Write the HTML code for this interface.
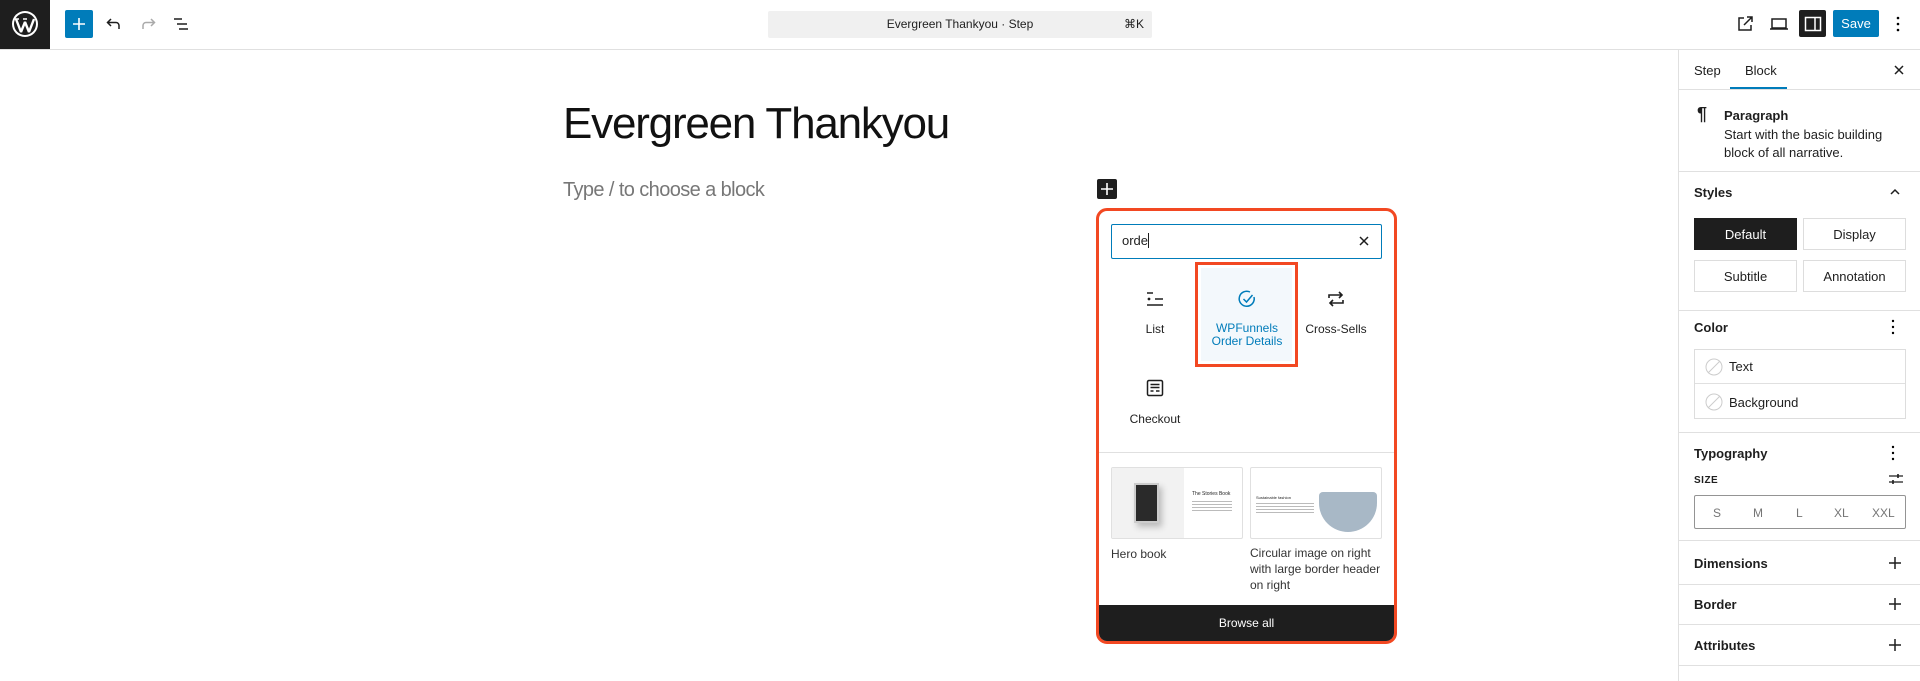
<!DOCTYPE html>
<html><head><meta charset="utf-8"><style>
*{box-sizing:border-box;margin:0;padding:0}
body{width:1920px;height:681px;overflow:hidden;background:#fff;font-family:"Liberation Sans",sans-serif;color:#1e1e1e;font-size:13px;position:relative}
.a{position:absolute}
.hr{position:absolute;height:1px;background:#e0e0e0}
.ic{position:absolute}
.sb{left:1678px;width:242px}
.h2{position:absolute;left:1694px;font-size:13px;font-weight:600;color:#1e1e1e}
.btn{position:absolute;border:1px solid #ddd;height:32px;width:103px;display:flex;align-items:center;justify-content:center;font-size:13px}
.lbl{position:absolute;font-size:12px;text-align:center;width:100px}
</style></head><body>
<!-- top bar -->
<div class="a" style="left:0;top:0;width:50px;height:49px;background:#1e1e1e"></div>
<svg class="ic" style="left:11px;top:10px" width="28" height="28" viewBox="0 0 28 28"><circle cx="14" cy="14" r="13" fill="#fff"/><circle cx="14" cy="14" r="11" fill="#1e1e1e"/><path d="M5 9 L10 22 L14 12 L18 22 L23 9" stroke="#fff" stroke-width="2.4" fill="none" stroke-linejoin="bevel"/><path d="M4 9h4M12 9h4" stroke="#fff" stroke-width="1.5"/></svg>
<div class="hr" style="left:0;top:49px;width:1920px"></div>
<div class="a" style="left:65px;top:10px;width:28px;height:28px;background:#007cba;border-radius:2px"></div>
<svg class="ic" style="left:71px;top:16px" width="16" height="16"><path d="M8 2v12M2 8h12" stroke="#fff" stroke-width="1.6"/></svg>
<svg class="ic" style="left:105px;top:15px" width="18" height="18"><path d="M6 4L2.5 7.5 6 11M3 7.5h8a3 3 0 0 1 3 3V14" stroke="#1e1e1e" stroke-width="1.5" fill="none"/></svg>
<svg class="ic" style="left:139px;top:15px" width="18" height="18"><path d="M12 4l3.5 3.5L12 11M15 7.5H7a3 3 0 0 0-3 3V14" stroke="#aaa" stroke-width="1.5" fill="none"/></svg>
<svg class="ic" style="left:172px;top:15px" width="18" height="18"><path d="M2 4h8M5 9h10M7 14h9" stroke="#1e1e1e" stroke-width="1.5"/></svg>
<div class="a" style="left:768px;top:11px;width:384px;height:27px;background:#f0f0f0;border-radius:2px"></div>
<div class="a" style="left:768px;top:11px;width:384px;height:27px;line-height:27px;text-align:center;font-size:12px">Evergreen Thankyou · Step</div>
<div class="a" style="left:1124px;top:11px;line-height:27px;font-size:12px">⌘K</div>
<svg class="ic" style="left:1735px;top:14px" width="20" height="20"><path d="M9 4H4v12h12v-5M12 3h5v5M17 3l-8 8" stroke="#1e1e1e" stroke-width="1.5" fill="none"/></svg>
<svg class="ic" style="left:1768px;top:14px" width="22" height="20"><path d="M4 5h14v9H4zM2 15h18" stroke="#1e1e1e" stroke-width="1.5" fill="none"/></svg>
<div class="a" style="left:1799px;top:10px;width:27px;height:27px;background:#1e1e1e;border-radius:2px"></div>
<svg class="ic" style="left:1803px;top:14px" width="20" height="20"><rect x="2.5" y="3.5" width="15" height="13" stroke="#fff" stroke-width="1.5" fill="none"/><path d="M12 4v12" stroke="#fff" stroke-width="1.5"/></svg>
<div class="a" style="left:1833px;top:10px;width:46px;height:27px;background:#007cba;border-radius:2px;color:#fff;font-size:13px;line-height:27px;text-align:center">Save</div>
<svg class="ic" style="left:1890px;top:13px" width="16" height="22"><circle cx="8" cy="5" r="1.3"/><circle cx="8" cy="11" r="1.3"/><circle cx="8" cy="17" r="1.3"/></svg>

<!-- editor -->
<div class="a" style="left:563px;top:99px;font-size:44px;letter-spacing:-1.2px;color:#111;white-space:nowrap">Evergreen Thankyou</div>
<div class="a" style="left:563px;top:179px;font-size:20px;color:#777;letter-spacing:-0.6px;white-space:nowrap">Type / to choose a block</div>
<div class="a" style="left:1097px;top:179px;width:20px;height:20px;background:#1e1e1e;border-radius:2px"></div>
<svg class="ic" style="left:1100px;top:182px" width="14" height="14"><path d="M7 1v12M1 7h12" stroke="#fff" stroke-width="1.6"/></svg>

<!-- popup -->
<div class="a" style="left:1096px;top:208px;width:301px;height:436px;border:3px solid #f24822;border-radius:11px;overflow:hidden;background:#fff">
 <div class="a" style="left:0;bottom:0;width:100%;height:36px;background:#1e1e1e;color:#fff;font-size:12px;text-align:center;line-height:36px">Browse all</div>
</div>
<div class="a" style="left:1111px;top:224px;width:271px;height:35px;border:1.5px solid #007cba;border-radius:2px"></div>
<div class="a" style="left:1122px;top:233px;font-size:13px">orde<span style="display:inline-block;width:1px;height:15px;background:#1e1e1e;vertical-align:-3px"></span></div>
<svg class="ic" style="left:1357px;top:234px" width="14" height="14"><path d="M3 3l8 8M11 3l-8 8" stroke="#1e1e1e" stroke-width="1.5"/></svg>
<div class="a" style="left:1195px;top:262px;width:103px;height:105px;border:3px solid #f24822;background:#fff"></div>
<div class="a" style="left:1201px;top:268px;width:91px;height:93px;background:#f3f8fc"></div>
<svg class="ic" style="left:1146px;top:290px" width="18" height="18"><path d="M1 3h6M9 9h8M1 15h16" stroke="#1e1e1e" stroke-width="1.5"/><circle cx="3" cy="9" r="1.4" fill="#1e1e1e"/></svg>
<svg class="ic" style="left:1237px;top:289px" width="20" height="20"><path d="M17 8A7.5 7.5 0 1 1 13 3" stroke="#007cba" stroke-width="1.5" fill="none"/><path d="M6.5 10l3 3 6-7" stroke="#007cba" stroke-width="1.5" fill="none"/></svg>
<svg class="ic" style="left:1326px;top:289px" width="20" height="20"><path d="M3 9V6h13M13 3l3 3-3 3M17 11v3H4M7 17l-3-3 3-3" stroke="#1e1e1e" stroke-width="1.6" fill="none"/></svg>
<svg class="ic" style="left:1146px;top:379px" width="18" height="18"><rect x="1.5" y="1.5" width="15" height="15" rx="1.5" stroke="#1e1e1e" stroke-width="1.5" fill="none"/><path d="M4.5 5.5h9M4.5 8.5h9M4.5 12h3M10 12h3.5" stroke="#1e1e1e" stroke-width="1.5"/></svg>
<div class="lbl" style="left:1105px;top:322px">List</div>
<div class="lbl" style="left:1197px;top:322px;color:#007cba;line-height:13px">WPFunnels<br>Order Details</div>
<div class="lbl" style="left:1286px;top:322px">Cross-Sells</div>
<div class="lbl" style="left:1105px;top:412px">Checkout</div>
<div class="hr" style="left:1099px;top:452px;width:295px"></div>
<!-- patterns -->
<div class="a" style="left:1111px;top:467px;width:132px;height:72px;border:1px solid #e0e0e0;border-radius:2px;overflow:hidden;background:#fff">
 <div class="a" style="left:0;top:0;width:72px;height:72px;background:#f2f2f2"></div>
 <div class="a" style="left:22px;top:15px;width:25px;height:40px;background:#2a2a2a;border:2px solid #ccc;box-shadow:3px 4px 6px #bbb"></div>
 <div class="a" style="left:80px;top:23px;font-size:5px">The Stories Book</div>
 <div class="a" style="left:80px;top:33px;width:40px;height:10px;background:repeating-linear-gradient(#bbb 0 1px,transparent 1px 3px)"></div>
</div>
<div class="a" style="left:1250px;top:467px;width:132px;height:72px;border:1px solid #e0e0e0;border-radius:2px;overflow:hidden;background:#fff">
 <div class="a" style="left:5px;top:27px;font-size:4px">Sustainable fashion</div>
 <div class="a" style="left:5px;top:35px;width:58px;height:10px;background:repeating-linear-gradient(#bbb 0 1px,transparent 1px 3px)"></div>
 <div class="a" style="left:68px;top:24px;width:58px;height:40px;background:#a8b8c6;border-radius:4px 4px 30px 30px"></div>
</div>
<div class="a" style="left:1111px;top:547px;font-size:12px;color:#333">Hero book</div>
<div class="a" style="left:1250px;top:545px;font-size:12px;line-height:16px;color:#333;width:135px">Circular image on right with large border header on right</div>

<!-- sidebar -->
<div class="a" style="left:1678px;top:49px;width:1px;height:632px;background:#e0e0e0"></div>
<div class="a" style="left:1694px;top:63px">Step</div>
<div class="a" style="left:1745px;top:63px">Block</div>
<div class="a" style="left:1730px;top:87px;width:57px;height:2px;background:#007cba"></div>
<svg class="ic" style="left:1892px;top:63px" width="14" height="14"><path d="M3 3l8 8M11 3l-8 8" stroke="#1e1e1e" stroke-width="1.5"/></svg>
<div class="hr" style="left:1679px;top:89px;width:241px"></div>
<div class="a" style="left:1697px;top:104px;font-size:18px;font-weight:bold">¶</div>
<div class="a" style="left:1724px;top:108px;font-weight:600">Paragraph</div>
<div class="a" style="left:1724px;top:126px;line-height:18px;width:190px">Start with the basic building block of all narrative.</div>
<div class="hr" style="left:1679px;top:171px;width:241px"></div>
<div class="h2" style="top:185px">Styles</div>
<svg class="ic" style="left:1888px;top:185px" width="14" height="14"><path d="M3 9l4-4 4 4" stroke="#1e1e1e" stroke-width="1.5" fill="none"/></svg>
<div class="btn" style="left:1694px;top:218px;background:#1e1e1e;color:#fff;border-color:#1e1e1e">Default</div>
<div class="btn" style="left:1803px;top:218px">Display</div>
<div class="btn" style="left:1694px;top:260px">Subtitle</div>
<div class="btn" style="left:1803px;top:260px">Annotation</div>
<div class="hr" style="left:1679px;top:310px;width:241px"></div>
<div class="h2" style="top:320px">Color</div>
<svg class="ic" style="left:1889px;top:318px" width="8" height="18"><circle cx="4" cy="3" r="1.2"/><circle cx="4" cy="9" r="1.2"/><circle cx="4" cy="15" r="1.2"/></svg>
<div class="a" style="left:1694px;top:349px;width:212px;height:70px;border:1px solid #ddd"></div>
<div class="hr" style="left:1695px;top:383px;width:210px"></div>
<svg class="ic" style="left:1705px;top:358px" width="18" height="18"><circle cx="9" cy="9" r="8" stroke="#ccc" fill="none"/><path d="M3 15L15 3" stroke="#ccc"/></svg>
<svg class="ic" style="left:1705px;top:393px" width="18" height="18"><circle cx="9" cy="9" r="8" stroke="#ccc" fill="none"/><path d="M3 15L15 3" stroke="#ccc"/></svg>
<div class="a" style="left:1729px;top:359px">Text</div>
<div class="a" style="left:1729px;top:395px">Background</div>
<div class="hr" style="left:1679px;top:432px;width:241px"></div>
<div class="h2" style="top:446px">Typography</div>
<svg class="ic" style="left:1889px;top:444px" width="8" height="18"><circle cx="4" cy="3" r="1.2"/><circle cx="4" cy="9" r="1.2"/><circle cx="4" cy="15" r="1.2"/></svg>
<div class="a" style="left:1694px;top:475px;font-size:10px;font-weight:600;letter-spacing:0.5px">SIZE</div>
<svg class="ic" style="left:1888px;top:472px" width="16" height="14"><path d="M1 4h14M1 10h14" stroke="#1e1e1e" stroke-width="1.3"/><path d="M10 2v4M5 8v4" stroke="#1e1e1e" stroke-width="1.6"/></svg>
<div class="a" style="left:1694px;top:495px;width:212px;height:34px;border:1px solid #949494;border-radius:2px"></div>
<div class="a" style="left:1713px;top:506px;font-size:12px;color:#757575">S</div>
<div class="a" style="left:1753px;top:506px;font-size:12px;color:#757575">M</div>
<div class="a" style="left:1796px;top:506px;font-size:12px;color:#757575">L</div>
<div class="a" style="left:1834px;top:506px;font-size:12px;color:#757575">XL</div>
<div class="a" style="left:1872px;top:506px;font-size:12px;color:#757575">XXL</div>
<div class="hr" style="left:1679px;top:540px;width:241px"></div>
<div class="h2" style="top:556px">Dimensions</div>
<div class="hr" style="left:1679px;top:584px;width:241px"></div>
<div class="h2" style="top:597px">Border</div>
<div class="hr" style="left:1679px;top:624px;width:241px"></div>
<div class="h2" style="top:638px">Attributes</div>
<div class="hr" style="left:1679px;top:665px;width:241px"></div>
<svg class="ic" style="left:1888px;top:556px" width="14" height="14"><path d="M7 1v12M1 7h12" stroke="#1e1e1e" stroke-width="1.5"/></svg>
<svg class="ic" style="left:1888px;top:597px" width="14" height="14"><path d="M7 1v12M1 7h12" stroke="#1e1e1e" stroke-width="1.5"/></svg>
<svg class="ic" style="left:1888px;top:638px" width="14" height="14"><path d="M7 1v12M1 7h12" stroke="#1e1e1e" stroke-width="1.5"/></svg>
</body></html>
